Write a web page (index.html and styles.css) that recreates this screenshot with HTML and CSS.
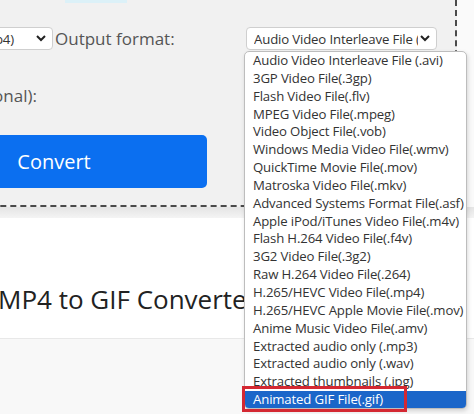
FILE: index.html
```html
<!DOCTYPE html>
<html lang="en">
<head>
    <meta charset="UTF-8" />
    <title>MP4 to GIF Converter</title>
    <link rel="stylesheet" href="styles.css">
</head>
<body>
<div class="panel">
    <div class="focus-tab"></div>
    <div class="row">
        <div class="fake-select select-input">
            <span class="select-text">MPEG-4 Video File(.mp4)</span>
            <svg class="chevron" width="10" height="7" viewBox="0 0 10 7"><polyline points="1,1 5,5 9,1" fill="none" stroke="#222" stroke-width="2"/></svg>
        </div>
        <span class="field-label">Output format:</span>
        <div class="fake-select select-output">
            <span class="select-text">Audio Video Interleave File (.avi)</span>
            <svg class="chevron" width="10" height="7" viewBox="0 0 10 7"><polyline points="1,1 5,5 9,1" fill="none" stroke="#222" stroke-width="2"/></svg>
        </div>
    </div>
    <div class="row-optional">
        <span class="field-label">Frame rate (optional):</span>
    </div>
    <button type="button" class="btn-convert">Convert</button>
</div>
<div class="band"></div>
<section class="intro">
    <h2>MP4 to GIF Converter</h2>
</section>
<footer class="lower"></footer>

<ul class="dropdown">
    <li>Audio Video Interleave File (.avi)</li>
    <li>3GP Video File(.3gp)</li>
    <li>Flash Video File(.flv)</li>
    <li>MPEG Video File(.mpeg)</li>
    <li>Video Object File(.vob)</li>
    <li>Windows Media Video File(.wmv)</li>
    <li>QuickTime Movie File(.mov)</li>
    <li>Matroska Video File(.mkv)</li>
    <li>Advanced Systems Format File(.asf)</li>
    <li>Apple iPod/iTunes Video File(.m4v)</li>
    <li>Flash H.264 Video File(.f4v)</li>
    <li>3G2 Video File(.3g2)</li>
    <li>Raw H.264 Video File(.264)</li>
    <li>H.265/HEVC Video File(.mp4)</li>
    <li>H.265/HEVC Apple Movie File(.mov)</li>
    <li>Anime Music Video File(.amv)</li>
    <li>Extracted audio only (.mp3)</li>
    <li>Extracted audio only (.wav)</li>
    <li>Extracted thumbnails (.jpg)</li>
    <li class="selected">Animated GIF File(.gif)</li>
</ul>
<div class="highlight-box"></div>
</body>
</html>
```

FILE: styles.css
```css
/* Base */
* {
    box-sizing: border-box;
}
body {
    margin: 0;
    width: 474px;
    height: 414px;
    overflow: hidden;
    background: #fafafa;
    font-family: 'Open Sans', 'Noto Sans', sans-serif;
    color: #333;
    position: relative;
}

/* Form panel */
.panel {
    margin-left: -180px;
    width: 637px;
    height: 207px;
    background: #f1f1f1;
    border-right: 2px dashed #4a4a4a;
    border-bottom: 2px dashed #4a4a4a;
    position: relative;
}
.focus-tab {
    position: absolute;
    left: 245px;
    top: 0;
    width: 62px;
    height: 3px;
    background: #dcf1f8;
}
.row {
    display: flex;
    align-items: center;
    padding-top: 27px;
}
.fake-select {
    height: 23px;
    background: #fff;
    border: 1px solid #cfcfcf;
    border-radius: 4px;
    display: flex;
    align-items: center;
    padding: 0 6px 0 7px;
    overflow: hidden;
}
.select-text {
    flex: 1;
    font-size: 13.2px;
    letter-spacing: -0.15px;
    color: #333;
    white-space: nowrap;
    overflow: hidden;
}
.chevron {
    flex: none;
    margin-left: 2px;
}
.select-input {
    width: 200px;
    margin-left: 33px;
}
.select-input .select-text {
    text-align: right;
    padding-right: 20px;
}
.field-label {
    font-size: 17px;
    color: #555;
    margin-left: 2px;
    white-space: nowrap;
}
.select-output {
    width: 191px;
    margin-left: auto;
    margin-right: 18px;
}
.row-optional {
    margin-top: 34px;
    width: 217px;
    text-align: right;
}
.row-optional .field-label {
    margin-left: 0;
}
.btn-convert {
    display: block;
    margin: 28px 0 0 81px;
    width: 306px;
    height: 53px;
    border: none;
    border-radius: 5px;
    background: #0b6ff0;
    color: #fff;
    font-family: inherit;
    font-size: 20px;
}

/* Content below panel */
.band {
    height: 11px;
    background: linear-gradient(#e4e4e4, #f4f4f4);
}
.intro {
    background: #fff;
    height: 121px;
    padding-top: 63px;
    border-bottom: 1px solid #e8e8e8;
    box-shadow: 0 2px 3px rgba(0,0,0,0.05);
}
.intro h2 {
    margin: 0 0 0 -2px;
    font-size: 26px;
    font-weight: 400;
    color: #222;
    white-space: nowrap;
}
.lower {
    height: 80px;
    background: #f8f8f8;
}

/* Open select list */
.dropdown {
    position: absolute;
    left: 244px;
    top: 51px;
    width: 223px;
    height: 358px;
    margin: 0;
    padding: 0;
    list-style: none;
    background: #fff;
    border: 1px solid #bdbdbd;
    border-radius: 5px;
    box-shadow: 1px 2px 4px rgba(0,0,0,0.15);
    overflow: hidden;
}
.dropdown li {
    height: 17.85px;
    line-height: 17.85px;
    padding-left: 8px;
    font-size: 13.2px;
    letter-spacing: -0.15px;
    color: #333;
    white-space: nowrap;
}
.dropdown li.selected {
    background: #1b66c9;
    color: #fff;
}
.highlight-box {
    position: absolute;
    left: 242px;
    top: 386px;
    width: 165px;
    height: 26px;
    border: 3px solid #d42832;
}
```
